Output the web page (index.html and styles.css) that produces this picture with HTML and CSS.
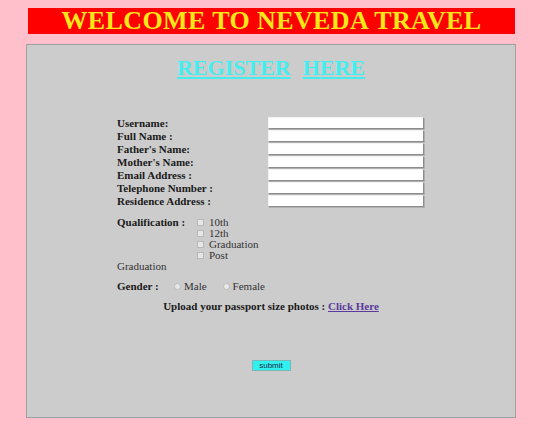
FILE: index.html
```html
<!DOCTYPE html>
<html>
<head>
<meta charset="utf-8">
<title>Neveda Travel</title>
<link rel="stylesheet" href="styles.css">
</head>
<body>
<div class="banner">WELCOME TO NEVEDA TRAVEL</div>
<div class="card">
  <div class="title"><a class="tlink" href="#">REGISTER</a><a class="tlink" href="#">HERE</a></div>
  <form class="form">
    <div class="grid">
      <label class="lbl">Username:</label><input class="field" type="text">
      <label class="lbl">Full Name :</label><input class="field" type="text">
      <label class="lbl">Father's Name:</label><input class="field" type="text">
      <label class="lbl">Mother's Name:</label><input class="field" type="text">
      <label class="lbl">Email Address :</label><input class="field" type="text">
      <label class="lbl">Telephone Number :</label><input class="field" type="text">
      <label class="lbl">Residence Address :</label><input class="field" type="text">
    </div>
    <div class="qual">
      <div class="qlbl">Qualification :</div>
      <div class="qlist">
        <div class="opt"><input class="chk" type="checkbox">10th</div>
        <div class="opt"><input class="chk" type="checkbox">12th</div>
        <div class="opt"><input class="chk" type="checkbox">Graduation</div>
        <div class="opt"><input class="chk" type="checkbox">Post</div>
      </div>
    </div>
    <div class="wrap">Graduation</div>
    <div class="gender">
      <span class="glbl">Gender :</span>
      <span class="ropt"><input class="rad" type="radio" name="g">Male</span>
      <span class="ropt"><input class="rad" type="radio" name="g">Female</span>
    </div>
  </form>
  <div class="upload">Upload your passport size photos : <a class="click" href="#">Click Here</a></div>
  <div class="actions"><button class="submit" type="button">submit</button></div>
</div>
</body>
</html>
```
FILE: styles.css
```css
html, body {
  margin: 0;
  padding: 0;
}
body {
  background: #ffc0cb;
  font-family: "Liberation Serif", "Times New Roman", serif;
  width: 540px;
  height: 435px;
  overflow: hidden;
}
.banner {
  margin: 8px 25px 0 28px;
  height: 26px;
  line-height: 26px;
  background: #ff0000;
  color: #f8e81a;
  font-weight: bold;
  font-size: 26px;
  letter-spacing: 0.4px;
  text-align: center;
  white-space: nowrap;
}
.card {
  margin: 10px 24px 0 26px;
  height: 372px;
  background: #cccccc;
  border: 1px solid #a0a0a0;
}
.title {
  margin-top: 12px;
  height: 22px;
  line-height: 22px;
  text-align: center;
  display: flex;
  justify-content: center;
  gap: 12px;
}
.tlink {
  color: #44eeee;
  font-size: 22px;
  font-weight: bold;
  text-decoration: underline;
}
.form {
  margin: 38px 0 0 90px;
}
.grid {
  display: grid;
  grid-template-columns: 151px 156px;
  grid-auto-rows: 12px;
  row-gap: 1px;
}
.lbl {
  font-size: 11px;
  font-weight: bold;
  line-height: 12px;
  color: #1a1a1a;
  white-space: nowrap;
}
.field {
  box-sizing: border-box;
  width: 156px;
  height: 12px;
  margin: 0;
  padding: 0;
  background: #ffffff;
  border: 1px solid;
  border-color: #f2f2f2 #8c8c8c #8c8c8c #f2f2f2;
  box-shadow: 1px 1px 0 #b0b0b0;
}
.qual {
  display: flex;
  margin-top: 10px;
}
.qlbl {
  width: 80px;
  font-size: 11px;
  font-weight: bold;
  line-height: 11px;
  color: #1a1a1a;
}
.qlist {
  display: flex;
  flex-direction: column;
}
.opt, .wrap {
  font-size: 11px;
  line-height: 11px;
  color: #333333;
  display: flex;
  align-items: center;
}
.chk {
  appearance: none;
  box-sizing: border-box;
  width: 7px;
  height: 7px;
  margin: 0 5px 0 0;
  background: #e6e6e6;
  border: 1px solid #b8b8b8;
}
.gender {
  margin-top: 9px;
  display: flex;
  align-items: center;
  font-size: 11px;
  line-height: 11px;
}
.glbl {
  font-weight: bold;
  color: #1a1a1a;
  width: 57px;
}
.ropt {
  display: flex;
  align-items: center;
  color: #333333;
  margin-right: 16px;
}
.rad {
  appearance: none;
  box-sizing: border-box;
  width: 7px;
  height: 7px;
  margin: 0 3px 0 0;
  border-radius: 50%;
  background: #e8e8e8;
  border: 1px solid #bcbcbc;
}
.upload {
  margin-top: 9px;
  text-align: center;
  font-size: 11px;
  line-height: 11px;
  font-weight: bold;
  color: #1a1a1a;
}
.click {
  color: #5b3a9e;
  text-decoration: underline;
}
.actions {
  margin-top: 48px;
  display: flex;
  justify-content: center;
}
.submit {
  width: 39px;
  height: 11px;
  padding: 0;
  margin: 0;
  background: #33f0f0;
  border: 1px solid #7ab8b8;
  font-family: "Liberation Sans", Arial, sans-serif;
  font-size: 8px;
  line-height: 9px;
  color: #1a2a40;
}
```
